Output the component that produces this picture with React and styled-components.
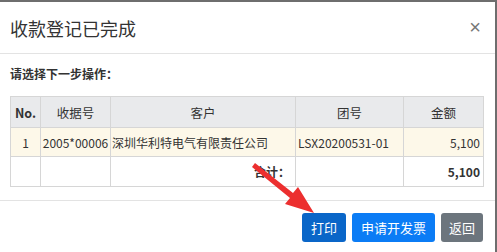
import React from "react";
import styled, { createGlobalStyle } from "styled-components";

const Global = createGlobalStyle`
  html, body { margin: 0; padding: 0; background: #6e6e6e; }
  body { font-family: "Noto Sans CJK SC", "Microsoft YaHei", sans-serif; }
  #root { width: 497px; height: 252px; overflow: hidden; }
`;

const Stage = styled.div`
  position: relative;
  width: 497px;
  height: 252px;
  padding-top: 2px;
  box-sizing: border-box;
`;

const Modal = styled.div`
  width: 495px;
  height: 250px;
  background: #fff;
  display: flex;
  flex-direction: column;
`;

const Header = styled.div`
  height: 51px;
  display: flex;
  align-items: center;
  justify-content: space-between;
  padding: 0 14px 0 10px;
  border-bottom: 1px solid #e3e3e3;
`;

const Title = styled.h4`
  margin: 0;
  font-size: 18px;
  font-weight: 400;
  color: #333;
`;

const Close = styled.span`
  font-size: 20px;
  line-height: 1;
  color: #777;
  font-family: "Liberation Sans", Arial, sans-serif;
  margin-top: -2px;
`;

const Body = styled.div`
  padding: 12px 12px 13px 10px;
`;

const Prompt = styled.div`
  font-size: 12px;
  font-weight: 700;
  line-height: 16px;
  color: #333;
  margin-bottom: 14px;
`;

const Table = styled.table`
  width: 473px;
  border-collapse: collapse;
  table-layout: fixed;
  font-size: 12px;
  color: #333;
`;

const Th = styled.th`
  height: 30px;
  padding: 0 3px;
  background: #e9eaec;
  border: 1px solid #d6d6d6;
  font-size: 12.5px;
  font-weight: ${(p) => (p.$bold ? 700 : 400)};
  text-align: center;
  white-space: nowrap;
`;

const Tr = styled.tr`
  background: ${(p) => (p.$hl ? "#fdf8e9" : "#fff")};
`;

const Td = styled.td`
  height: ${(p) => p.$h || 28}px;
  padding: 0 ${(p) => (p.$pad ?? 3)}px;
  border: 1px solid #d6d6d6;
  text-align: ${(p) => p.$align || "center"};
  font-weight: ${(p) => (p.$bold ? 700 : 400)};
  font-size: 12px;
  white-space: nowrap;
`;

const Footer = styled.div`
  border-top: 1px solid #e3e3e3;
  display: flex;
  justify-content: flex-end;
  gap: 6px;
  padding: 12px 12px 0 0;
`;

const Button = styled.button`
  height: 29px;
  padding: 0 ${(p) => p.$px || 9}px;
  border: none;
  border-radius: 3px;
  color: #fff;
  font-size: 13px;
  font-family: inherit;
  background: ${(p) => p.$bg};
  cursor: pointer;
`;

const Arrow = styled.svg`
  position: absolute;
  left: 0;
  top: 0;
  pointer-events: none;
`;

export default function App() {
  return (
    <Stage>
      <Global />
      <Modal>
        <Header>
          <Title>收款登记已完成</Title>
          <Close>×</Close>
        </Header>
        <Body>
          <Prompt>请选择下一步操作：</Prompt>
          <Table>
            <colgroup>
              <col style={{ width: 30 }} />
              <col style={{ width: 70 }} />
              <col style={{ width: 185 }} />
              <col style={{ width: 108 }} />
              <col style={{ width: 80 }} />
            </colgroup>
            <thead>
              <tr>
                <Th $bold>No.</Th>
                <Th>收据号</Th>
                <Th>客户</Th>
                <Th>团号</Th>
                <Th>金额</Th>
              </tr>
            </thead>
            <tbody>
              <Tr $hl>
                <Td>1</Td>
                <Td $pad={0}>2005*00006</Td>
                <Td $pad={1} $align="left">深圳华利特电气有限责任公司</Td>
                <Td $pad={2} $align="left">LSX20200531-01</Td>
                <Td $align="right">5,100</Td>
              </Tr>
              <Tr>
                <Td $h={29}></Td>
                <Td $h={29}></Td>
                <Td $h={29} $pad={5} $align="right" $bold>合计：</Td>
                <Td $h={29}></Td>
                <Td $h={29} $align="right" $bold>5,100</Td>
              </Tr>
            </tbody>
          </Table>
        </Body>
        <Footer>
          <Button $bg="#0a66c8" $px={9}>打印</Button>
          <Button $bg="#0b7cf5" $px={9}>申请开发票</Button>
          <Button $bg="#6c757d" $px={8}>返回</Button>
        </Footer>
      </Modal>
      <Arrow width="497" height="252" viewBox="0 0 497 252">
        <polygon
          points="252,167 255,163 293,193 298,187 314,213 285,204 290,198"
          fill="#ec2f2f"
        />
      </Arrow>
    </Stage>
  );
}
